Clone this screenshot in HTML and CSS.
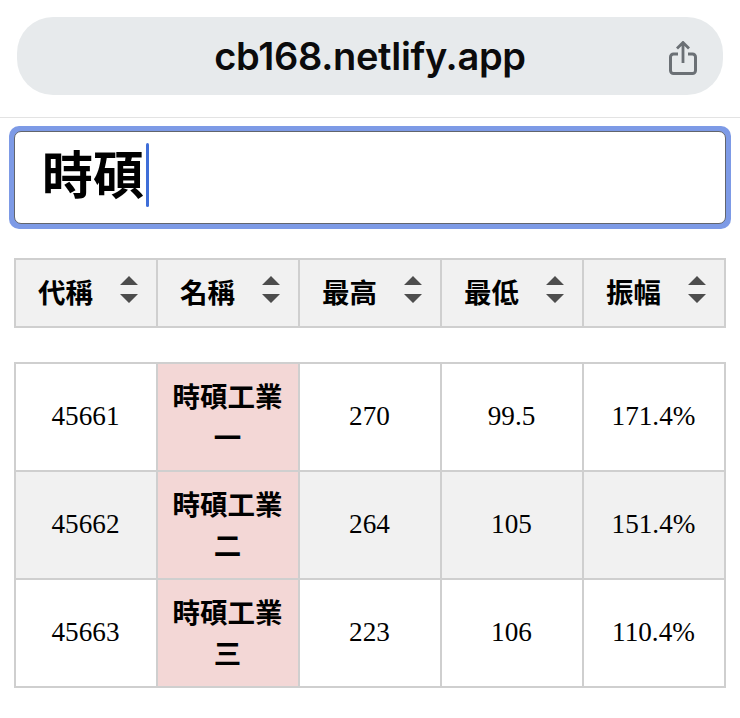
FILE: index.html
```html
<!DOCTYPE html>
<html lang="zh-Hant">
<head>
<meta charset="utf-8">
<title>cb168.netlify.app</title>
<link rel="stylesheet" href="styles.css">
</head>
<body>
<header class="browser-bar">
  <div class="address">
    <span class="url">cb168.netlify.app</span>
    <svg class="share" viewBox="0 0 30 34" width="30" height="34" aria-hidden="true">
      <path d="M10 13H5.500A3 3 0 0 0 2.500 16V29.500A3 3 0 0 0 5.500 32.500H24.500A3 3 0 0 0 27.500 29.500V16A3 3 0 0 0 24.500 13H20" fill="none" stroke="#6b7075" stroke-width="3"/>
      <path d="M15 22V2M9 7.500 15 1.500 21 7.500" fill="none" stroke="#6b7075" stroke-width="2.800"/>
    </svg>
  </div>
</header>
<main class="page">
  <div class="search"><div class="search-box"><span class="search-text">時碩</span><span class="caret"></span></div></div>
  <table class="grid head">
    <tr>
      <th><div class="th-in"><span class="th-label">代稱</span><svg class="sort" viewBox="0 0 18 27" width="18" height="27"><path d="M9 0 18 9H0ZM0 18H18L9 27Z"/></svg></div></th>
      <th><div class="th-in"><span class="th-label">名稱</span><svg class="sort" viewBox="0 0 18 27" width="18" height="27"><path d="M9 0 18 9H0ZM0 18H18L9 27Z"/></svg></div></th>
      <th><div class="th-in"><span class="th-label">最高</span><svg class="sort" viewBox="0 0 18 27" width="18" height="27"><path d="M9 0 18 9H0ZM0 18H18L9 27Z"/></svg></div></th>
      <th><div class="th-in"><span class="th-label">最低</span><svg class="sort" viewBox="0 0 18 27" width="18" height="27"><path d="M9 0 18 9H0ZM0 18H18L9 27Z"/></svg></div></th>
      <th><div class="th-in"><span class="th-label">振幅</span><svg class="sort" viewBox="0 0 18 27" width="18" height="27"><path d="M9 0 18 9H0ZM0 18H18L9 27Z"/></svg></div></th>
    </tr>
  </table>
  <table class="grid body">
    <tr><td>45661</td><td class="name">時碩工業一</td><td>270</td><td>99.5</td><td>171.4%</td></tr>
    <tr class="alt"><td>45662</td><td class="name">時碩工業二</td><td>264</td><td>105</td><td>151.4%</td></tr>
    <tr><td>45663</td><td class="name">時碩工業三</td><td>223</td><td>106</td><td>110.4%</td></tr>
  </table>
</main>
</body>
</html>
```
FILE: styles.css
```css
* { box-sizing: border-box; }
html, body { margin: 0; padding: 0; background: #fff; }
body { width: 740px; height: 718px; overflow: hidden; font-family: "Liberation Serif", "Noto Sans CJK TC", serif; color: #000; }
.browser-bar { height: 118px; padding: 17px 17px 0; border-bottom: 1px solid #e3e3e3; }
.address { position: relative; height: 78px; border-radius: 36px; background: #e7eaec; display: flex; align-items: center; justify-content: center; }
.url { font-family: Inter, "Liberation Sans", sans-serif; font-size: 38px; font-weight: 600; letter-spacing: -0.3px; color: #0b0b0c; }
.share { position: absolute; right: 25px; top: 24px; }
.page { padding: 8px 9px 0; }
.search { height: 103px; border-radius: 10px; background: #7d9ae6; padding: 5px; }
.search-box { height: 93px; background: #fff; border: 1.500px solid #62656c; border-radius: 7px; display: flex; align-items: center; padding: 0 0 6px 27px; }
.search-text { font-family: "Noto Sans CJK TC", sans-serif; font-weight: 700; font-size: 51px; line-height: 60px; margin-bottom: 6px; color: #000; }
.caret { width: 3px; height: 64px; border-radius: 2px; background: #3f6ed8; margin-left: 2px; }
.grid { width: 712px; margin-left: 5px; border-collapse: collapse; table-layout: fixed; }
.grid th, .grid td { border: 2px solid #cfcfcf; padding: 0; text-align: center; }
.head { margin-top: 29px; }
.head tr { height: 68px; }
.head th { background: #f1f1f1; font-family: "Noto Sans CJK TC", sans-serif; font-weight: 600; font-size: 27.500px; }
.th-in { display: flex; align-items: center; justify-content: space-between; padding: 0 18px 0 22px; }
.th-label { margin-bottom: 4px; }
.sort { fill: #4d4d4d; margin-bottom: 7px; }
.body { margin-top: 34px; }
.body tr { height: 108px; }
.body td { font-size: 27.200px; padding: 0 15px 2px 14px; }
.body .alt td { background: #f1f1f1; }
.body td.name, .body .alt td.name { background: #f3d7d6; font-family: "Noto Sans CJK TC", sans-serif; font-weight: 600; font-size: 27.500px; line-height: 41px; }
```
